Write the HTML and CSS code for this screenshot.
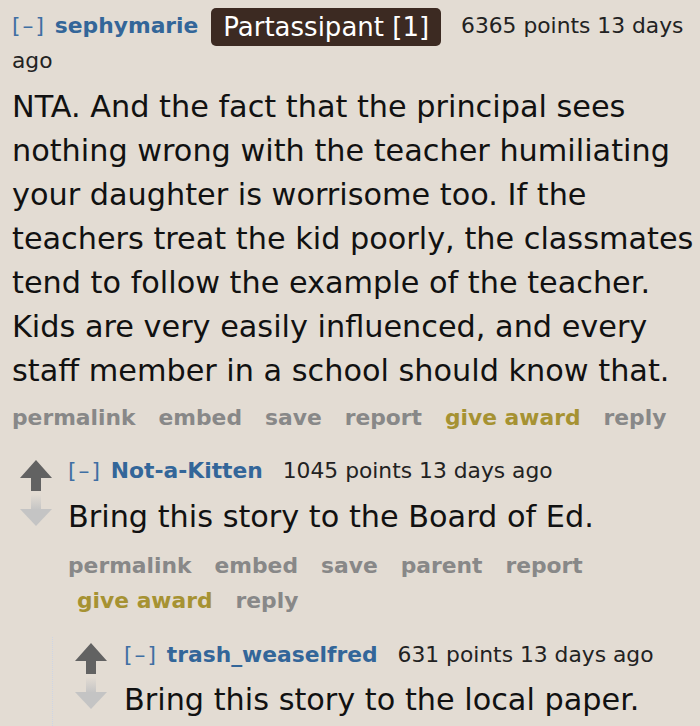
FILE: index.html
```html
<!DOCTYPE html>
<html lang="en">
<head>
<meta charset="utf-8">
<title>Comments</title>
<link rel="stylesheet" href="styles.css">
</head>
<body>
<div class="page">
  <div class="comment">
    <div class="tagline"><a class="expand">[–]</a> <a class="author">sephymarie</a> <span class="flair">Partassipant [1]</span> <span class="score">6365 points</span> <time>13 days ago</time></div>
    <div class="md"><p>NTA. And the fact that the principal sees nothing wrong with the teacher humiliating your daughter is worrisome too. If the teachers treat the kid poorly, the classmates tend to follow the example of the teacher. Kids are very easily influenced, and every staff member in a school should know that.</p></div>
    <ul class="buttons">
      <li><a>permalink</a></li>
      <li><a>embed</a></li>
      <li><a>save</a></li>
      <li><a>report</a></li>
      <li class="award"><a>give award</a></li>
      <li><a>reply</a></li>
    </ul>
  </div>

  <div class="thing child">
    <div class="row">
      <div class="votes">
        <svg width="32" height="66" viewBox="0 0 32 66">
          <defs><linearGradient id="fadeA" x1="0" y1="0" x2="0" y2="1"><stop offset="0" stop-color="#c4c4c4" stop-opacity="0"/><stop offset="1" stop-color="#c4c4c4"/></linearGradient></defs>
          <path d="M16 0 L32 18 L21 18 L21 31 L11 31 L11 18 L0 18 Z" fill="#626262"/>
          <rect x="11" y="34" width="10" height="16" fill="url(#fadeA)"/>
          <path d="M0 49 L32 49 L16 66 Z" fill="#c4c4c4"/>
        </svg>
      </div>
      <div class="entry">
        <div class="tagline"><a class="expand">[–]</a> <a class="author">Not-a-Kitten</a> <span class="score">1045 points</span> <time>13 days ago</time></div>
        <div class="md"><p>Bring this story to the Board of Ed.</p></div>
        <ul class="buttons">
          <li><a>permalink</a></li>
          <li><a>embed</a></li>
          <li><a>save</a></li>
          <li><a>parent</a></li>
          <li><a>report</a></li>
          <li class="award"><a>give award</a></li>
          <li><a>reply</a></li>
        </ul>
      </div>
    </div>
    <div class="children">
      <div class="thing grandchild">
        <div class="row">
          <div class="votes">
            <svg width="32" height="66" viewBox="0 0 32 66">
              <defs><linearGradient id="fadeB" x1="0" y1="0" x2="0" y2="1"><stop offset="0" stop-color="#c4c4c4" stop-opacity="0"/><stop offset="1" stop-color="#c4c4c4"/></linearGradient></defs>
              <path d="M16 0 L32 18 L21 18 L21 31 L11 31 L11 18 L0 18 Z" fill="#626262"/>
              <rect x="11" y="34" width="10" height="16" fill="url(#fadeB)"/>
              <path d="M0 49 L32 49 L16 66 Z" fill="#c4c4c4"/>
            </svg>
          </div>
          <div class="entry">
            <div class="tagline"><a class="expand">[–]</a> <a class="author">trash_weaselfred</a> <span class="score">631 points</span> <time>13 days ago</time></div>
            <div class="md"><p>Bring this story to the local paper.</p></div>
          </div>
        </div>
      </div>
    </div>
  </div>
</div>
</body>
</html>
```

FILE: styles.css
```css
* { box-sizing: border-box; }
html, body { margin: 0; background: #e3dcd3; }
body { font-family: "DejaVu Sans", Verdana, sans-serif; color: #111; }

.page { padding: 8px 0 0 12px; }

.tagline { font-size: 21.8px; line-height: 35px; color: #222; }
.expand { color: #3f6fa3; letter-spacing: 2px; margin-right: 2px; }
.author { color: #336699; font-weight: bold; text-decoration: none; }
.flair {
  background: #3c2a22;
  color: #fff;
  font-size: 26px;
  line-height: 1;
  padding: 4.3px 12px;
  border-radius: 5px;
  vertical-align: -3px;
  margin-left: 6px;
}
.score { margin-left: 13px; }

.md { font-size: 30.3px; line-height: 44px; margin-top: 6.5px; color: #111; }
.md p { margin: 0; }

.buttons {
  list-style: none;
  margin: 7.5px 0 0;
  padding: 0;
  display: flex;
  flex-wrap: wrap;
  font-size: 21.8px;
  line-height: 35px;
  font-weight: bold;
}
.buttons li { padding: 0 14px 0 9px; white-space: nowrap; }
.buttons li:first-child { padding-left: 0; }
.buttons a { color: #888; text-decoration: none; }
.buttons .award a { color: #a69232; }

.child { margin: 18px 0 0 8px; }
.row { display: flex; gap: 16px; }
.votes { flex: none; width: 32px; padding-top: 7px; }
.votes svg { display: block; }
.entry { flex: 1; min-width: 0; }

.child .entry .buttons { margin-top: 9.5px; }

.children {
  margin: 19px 0 0 32px;
  padding: 0 0 12px 22px;
  border-left: 1px dotted #cdd5e6;
}
.grandchild .row { gap: 17px; }
.grandchild .votes { padding-top: 6px; }
.grandchild .md { margin-top: 5.5px; }
```
